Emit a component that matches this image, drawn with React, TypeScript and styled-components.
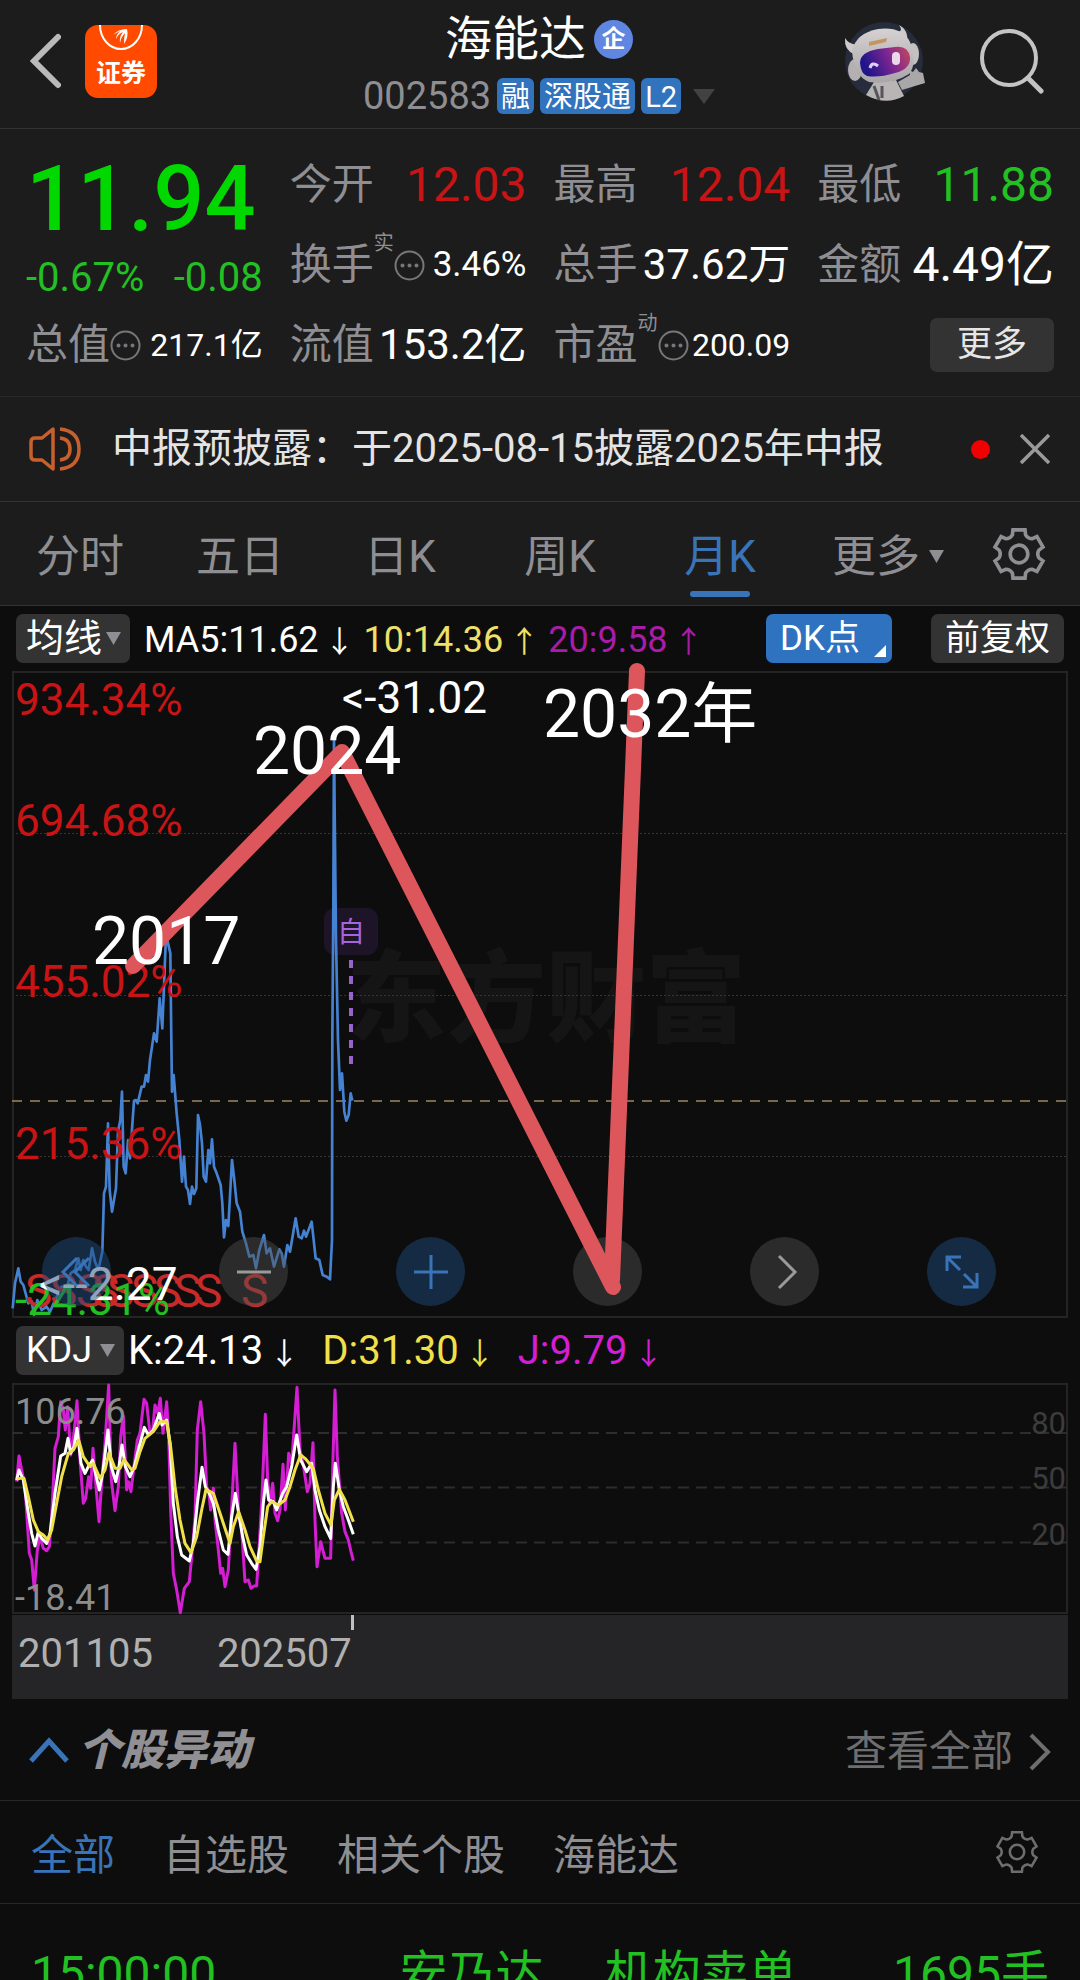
import React from "react";
import styled, { createGlobalStyle } from "styled-components";

const color = {
  panel: "#1c1c1c",
  page: "#0d0d0d",
  line: "#333333",
  frame: "#242424",
  label: "#8e8e93",
  green: "#22c022",
  red: "#c81414",
  blue: "#3a74b8",
  yellow: "#f0e04a",
  magenta: "#d41ed4",
};

const fontStack = `Roboto, "Noto Sans CJK SC", sans-serif`;

const GlobalStyle = createGlobalStyle`
  * { box-sizing: border-box; }
  body { margin: 0; background: ${color.page}; }
  button, select { font: inherit; color: inherit; background: none; border: 0; padding: 0; margin: 0; cursor: pointer; }
  svg { display: block; flex: none; }
  a { color: inherit; text-decoration: none; }
`;

const Page = styled.main`
  height: 100vh;
  overflow: hidden;
  background: ${color.page};
  color: #fff;
  font-family: ${fontStack};
`;

/* ---------- header ---------- */

const Header = styled.header`
  display: grid;
  grid-template-columns: 1fr auto 1fr;
  height: 129px;
  padding: 0 36px 0 30px;
  background: ${color.panel};
  border-bottom: 1px solid ${color.line};
`;

const HeaderSide = styled.div<{ $end?: boolean }>`
  display: flex;
  align-items: center;
  justify-content: ${(p) => (p.$end ? "flex-end" : "flex-start")};
  gap: ${(p) => (p.$end ? 54 : 24)}px;
  height: 122px;
`;

const IconButton = styled.button`
  display: flex;
  align-items: center;
  justify-content: center;
`;

const Broker = styled.button`
  display: flex;
  flex-direction: column;
  align-items: center;
  width: 72px;
  height: 73px;
  border-radius: 13px;
  background: #ff4a00;
  font-family: "Noto Sans CJK SC", sans-serif;
  font-weight: 700;
  font-size: 25px;
  line-height: 36px;
  color: #fff;
`;

const TitleBlock = styled.div`
  display: flex;
  flex-direction: column;
  align-items: center;
  padding: 11px 0 0 4px;
`;

const Title = styled.h1`
  display: flex;
  align-items: center;
  gap: 8px;
  margin: 0;
  font-size: 47px;
  font-weight: 400;
  line-height: 56px;
`;

const Certified = styled.span`
  display: flex;
  align-items: center;
  justify-content: center;
  width: 39px;
  height: 39px;
  border-radius: 50%;
  background: #5f86e0;
  font-size: 24px;
  font-weight: 700;
  line-height: 39px;
`;

const CodeRow = styled.div`
  display: flex;
  align-items: center;
  gap: 6px;
  height: 58px;
  font-size: 38px;
  line-height: 58px;
  color: ${color.label};
`;

const Tag = styled.span`
  height: 36px;
  padding: 0 4px;
  border-radius: 6px;
  background: #3273bd;
  color: #fff;
  font-size: 29px;
  line-height: 38px;
`;

const CodeCaret = styled(IconButton)`
  padding-left: 6px;
`;

/* ---------- quote ---------- */

const Quote = styled.section`
  display: grid;
  grid-template-columns: repeat(4, minmax(0, 1fr));
  grid-auto-rows: 80px;
  column-gap: 27px;
  padding: 16px 26px 11px;
  background: ${color.panel};
  border-bottom: 1px solid #282828;
`;

const PriceCell = styled.div`
  grid-row: span 2;
  display: flex;
  flex-direction: column;
  color: ${color.green};
`;

const Price = styled.strong`
  font-size: 90px;
  font-weight: 500;
  line-height: 110px;
  color: #00d800;
`;

const Change = styled.div`
  display: flex;
  justify-content: space-between;
  font-size: 40px;
  line-height: 46px;
`;

const Stat = styled.div`
  display: flex;
  align-items: center;
  justify-content: space-between;
  height: 80px;
  white-space: nowrap;
`;

const StatLabel = styled.span`
  display: flex;
  align-items: center;
  height: 60px;
  font-size: 42px;
  line-height: 62px;
  color: ${color.label};
`;

const Sup = styled.sup`
  align-self: flex-start;
  font-size: 20px;
  line-height: 16px;
`;

const StatValue = styled.span<{ $size: number; $tone?: string }>`
  font-size: ${(p) => p.$size}px;
  line-height: 60px;
  color: ${(p) => p.$tone ?? "#fff"};
`;

const MoreButton = styled.button`
  justify-self: end;
  align-self: center;
  width: 124px;
  height: 54px;
  border-radius: 7px;
  background: ${color.line};
  font-size: 35px;
  line-height: 54px;
  color: #e6e6e6;
`;

/* ---------- notice ---------- */

const Notice = styled.section`
  display: flex;
  align-items: center;
  height: 105px;
  padding: 0 30px 0 28px;
  background: ${color.panel};
  border-bottom: 1px solid ${color.line};
`;

const NoticeText = styled.a`
  flex: 1;
  padding-left: 30px;
  font-size: 40px;
  line-height: 60px;
  white-space: nowrap;
  color: #e4e4e4;
`;

const Unread = styled.span`
  width: 19px;
  height: 19px;
  margin-right: 30px;
  border-radius: 50%;
  background: #f00000;
`;

/* ---------- period tabs ---------- */

const Periods = styled.nav`
  display: grid;
  grid-template-columns: repeat(5, 20fr) 22fr 13fr;
  height: 104px;
  background: ${color.panel};
  border-bottom: 1px solid ${color.line};
`;

const Period = styled.button<{ $active?: boolean }>`
  position: relative;
  display: flex;
  align-items: center;
  justify-content: center;
  gap: 9px;
  height: 103px;
  padding-top: 6px;
  white-space: nowrap;
  font-size: 44px;
  line-height: 60px;
  color: ${(p) => (p.$active ? color.blue : color.label)};

  &::after {
    content: "";
    display: ${(p) => (p.$active ? "block" : "none")};
    position: absolute;
    bottom: 8px;
    width: 60px;
    height: 6px;
    border-radius: 3px;
    background: ${color.blue};
  }
`;

const GearButton = styled(IconButton)`
  justify-content: flex-start;
  height: 103px;
  padding-left: 16px;
`;

/* ---------- chart ---------- */

const IndicatorRow = styled.div`
  display: flex;
  align-items: center;
  height: 65px;
  padding: 0 16px;
`;

const Picker = styled.label<{ $gap: number }>`
  position: relative;
  display: flex;
  align-items: center;
  margin-right: ${(p) => p.$gap}px;

  svg { position: absolute; right: 9px; pointer-events: none; }
`;

const PickerSelect = styled.select<{ $size: number }>`
  appearance: none;
  width: ${(p) => p.$size * 3}px;
  height: 49px;
  padding-left: 10px;
  border-radius: 7px;
  background: ${color.line};
  font-size: ${(p) => p.$size}px;
  line-height: 49px;
`;

const Reading = styled.span<{ $tone: string; $size: number; $gap: number }>`
  margin-right: ${(p) => p.$gap}px;
  padding-top: 4px;
  font-size: ${(p) => p.$size}px;
  line-height: 60px;
  white-space: nowrap;
  color: ${(p) => p.$tone};
`;

const Arrow = styled.span`
  padding: 0 6px;
  font-size: 30px;
`;

const ToolButton = styled.button<{ $primary?: boolean }>`
  position: relative;
  width: ${(p) => (p.$primary ? 126 : 133)}px;
  height: 49px;
  margin-left: ${(p) => (p.$primary ? "auto" : "39px")};
  padding-right: ${(p) => (p.$primary ? "18px" : "0")};
  border-radius: 7px;
  background: ${(p) => (p.$primary ? "#2f72c0" : color.line)};
  font-size: 35px;
  line-height: 50px;

  svg { position: absolute; right: 6px; bottom: 6px; }
`;

const ChartFrame = styled.div`
  position: relative;
  margin: 0 12px;

  > svg { width: 100%; height: auto; overflow: visible; font-family: ${fontStack}; }
`;

const Annotations = styled.svg`
  position: absolute;
  inset: 0;
  pointer-events: none;
`;

const ChartControls = styled.div`
  position: absolute;
  left: 30px;
  right: 72px;
  bottom: 12px;
  display: flex;
  justify-content: space-between;
`;

const RoundButton = styled(IconButton)<{ $blue?: boolean }>`
  width: 69px;
  height: 69px;
  border-radius: 50%;
  background: ${(p) => (p.$blue ? "rgba(30, 74, 122, 0.5)" : "rgba(80, 80, 80, 0.45)")};
  color: ${(p) => (p.$blue ? color.blue : "#9a9a9a")};
`;

const DateStrip = styled.div`
  display: flex;
  gap: 64px;
  height: 84px;
  margin: 1px 12px 0;
  padding: 9px 6px;
  background: #252527;
  font-size: 40px;
  line-height: 60px;
  color: #b0b0b0;
`;

const LastDate = styled.time`
  position: relative;

  &::after {
    content: "";
    position: absolute;
    top: -9px;
    right: -2px;
    width: 3px;
    height: 15px;
    background: #c0c0c0;
  }
`;

/* ---------- movements ---------- */

const SectionHead = styled.div`
  display: flex;
  align-items: center;
  justify-content: space-between;
  height: 102px;
  padding: 0 29px;
  border-bottom: 1px solid #272727;
`;

const SectionTitle = styled.h2`
  display: flex;
  align-items: center;
  gap: 9px;
  margin: 0;
  font-size: 43px;
  font-style: italic;
  font-weight: 900;
  line-height: 60px;
  color: #909094;
`;

const SeeAll = styled.a`
  display: flex;
  align-items: center;
  gap: 16px;
  padding-top: 4px;
  font-size: 42px;
  line-height: 60px;
  color: #6e6e70;
`;

const Filters = styled.nav`
  display: flex;
  align-items: center;
  gap: 48px;
  height: 103px;
  padding: 0 41px 0 31px;
  border-bottom: 1px solid #272727;
`;

const Filter = styled.button<{ $active?: boolean }>`
  padding-top: 7px;
  font-size: 42px;
  line-height: 60px;
  color: ${(p) => (p.$active ? color.blue : color.label)};
`;

const FilterGear = styled(IconButton)`
  margin-left: auto;
`;

const Movements = styled.table`
  width: 100%;
  border-collapse: collapse;
  table-layout: fixed;
  font-size: 48px;
  line-height: 70px;
  color: ${color.green};

  td { padding: 35px 0; white-space: nowrap; }
  td:first-child { width: 37%; padding-left: 31px; }
  td:nth-child(2) { width: 19%; }
  td:last-child { padding-right: 31px; text-align: right; }
`;

/* ---------- icons ---------- */

const Caret = ({ w = 15, h = 13, fill = "#8e8e93" }: { w?: number; h?: number; fill?: string }) => (
  <svg width={w} height={h} viewBox="0 0 10 10" preserveAspectRatio="none" aria-hidden="true">
    <path d="M0 0H10L5 10Z" fill={fill} />
  </svg>
);

const Info = () => (
  <svg width="31" height="31" viewBox="0 0 31 31" aria-hidden="true">
    <circle cx="15.5" cy="15.5" r="14" fill="none" stroke="#77777b" strokeWidth="2" />
    <g fill="#77777b">
      <circle cx="8.5" cy="15.5" r="2" />
      <circle cx="15.5" cy="15.5" r="2" />
      <circle cx="22.5" cy="15.5" r="2" />
    </g>
  </svg>
);

const polar = (r: number, deg: number) => {
  const a = (deg * Math.PI) / 180;
  return `${(26 + r * Math.cos(a)).toFixed(2)} ${(26 + r * Math.sin(a)).toFixed(2)}`;
};

const gearPath =
  [0, 60, 120, 180, 240, 300]
    .map((step, i) => {
      const a = step - 90;
      return `${i ? "L" : "M"}${polar(19.5, a - 19)} L${polar(24, a - 14)} L${polar(24, a + 14)} L${polar(19.5, a + 19)} Q${polar(17, a + 30)} ${polar(19.5, a + 41)}`;
    })
    .join(" ") + "Z";

const Gear = ({ size, weight, tone }: { size: number; weight: number; tone: string }) => (
  <svg width={size} height={size} viewBox="0 0 52 52" fill="none" stroke={tone} strokeWidth={weight} aria-hidden="true">
    <path d={gearPath} />
    <circle cx="26" cy="26" r="8.5" />
  </svg>
);

const Robot = () => (
  <svg width="82" height="82" viewBox="0 0 82 82" aria-hidden="true">
    <defs>
      <linearGradient id="visor" x1="0" x2="1" y1="0.3" y2="0">
        <stop offset="0" stopColor="#20158a" />
        <stop offset="0.5" stopColor="#7a2592" />
        <stop offset="1" stopColor="#c84a5c" />
      </linearGradient>
      <linearGradient id="shell" x1="0" x2="0" y1="0" y2="1">
        <stop offset="0" stopColor="#d6d2d2" />
        <stop offset="1" stopColor="#a9a5a8" />
      </linearGradient>
    </defs>
    <circle cx="40" cy="41" r="39" fill="#262c3b" />
    <path d="M22 75L30 62L52 60L60 76Q42 86 22 75Z" fill="#b9b5b5" />
    <path d="M30 66L35 80M38 66V78" stroke="#55555c" strokeWidth="3" />
    <path d="M54 62L66 55L65 50L69 52L72 48L75 52L79 53L81 63L71 66L58 70Z" fill="#aaa7a8" />
    <path d="M1 18Q0 30 10 34L16 24Q6 26 1 18Z" fill="#cfcaca" />
    <path d="M52 12Q60 12 55 5Q65 10 63 23L57 26Z" fill="#cfcaca" />
    <ellipse cx="11" cy="50" rx="7" ry="11" fill="#b4b0b1" />
    <ellipse cx="69" cy="34" rx="6" ry="11" fill="#c5c1c1" />
    <path d="M8 31Q12 13 34 9Q58 6 66 22Q74 43 65 54Q48 65 25 62Q10 56 8 31Z" fill="url(#shell)" />
    <path d="M25 22L43 18L42 22L25 26Z" fill="#c4965f" />
    <path d="M16 43Q16 32 34 29L51 27Q64 25 66 37Q67 49 51 53Q35 58 23 56Q17 54 16 43Z" fill="url(#visor)" />
    <path d="M26 48Q28 41 34 46" fill="none" stroke="#ded0fa" strokeWidth="3" />
    <rect x="48" y="32" width="8" height="13" rx="4" fill="#ead7ea" />
  </svg>
);

/* ---------- data ---------- */

/* Series are sampled on a grid three times finer than the chart units. */
const PRICE =
  "38,805 45,730 55,685 62,725 70,735 85,790 95,785 102,825 112,780 125,810 140,800 150,815 165,780 185,740 200,745 212,700 225,690 235,655 242,690 250,660 258,680 266,690 276,625 285,665 295,690 307,635 312,460 318,440 324,250 329,450 336,515 348,445 354,275 361,240 366,155 371,380 377,400 384,300 390,355 402,182 408,180 413,190 425,140 432,140 438,105 444,125 450,60 462,-20 470,5 479,-125 487,-35 497,-290 503,-295 511,-260 514,0 516,155 521,105 530,220 538,300 546,425 552,350 558,440 564,450 570,492 576,440 582,462 589,445 594,225 600,255 606,310 611,410 618,425 625,330 630,370 636,298 642,380 650,400 662,435 667,490 672,592 678,540 685,558 696,360 703,420 710,490 720,515 727,575 738,610 748,650 760,645 768,685 778,630 792,585 800,640 810,625 822,680 838,628 845,640 852,680 862,615 870,635 887,535 896,590 905,595 912,572 918,590 935,545 947,655 958,660 968,705 980,710 990,718 996,600 997,0 1000,-400 1002,-915 1004,-690 1008,-300 1014,0 1020,150 1026,100 1033,215 1039,242 1046,225 1052,160 1057,182";

const J_LINE =
  "50,335 57,258 63,290 75,350 88,550 95,570 103,660 112,540 120,500 130,535 140,542 148,530 155,440 165,235 175,200 182,95 190,120 196,180 203,110 212,255 222,190 231,92 240,270 250,400 257,385 266,320 272,355 279,235 288,350 297,455 305,340 315,220 326,45 334,330 345,422 355,350 362,200 370,138 380,360 386,335 393,365 403,280 412,210 420,190 432,88 440,100 450,190 458,180 465,105 473,130 481,85 489,190 500,95 506,200 512,420 520,610 530,660 541,728 553,655 568,635 577,540 585,440 592,180 602,95 612,190 620,350 626,365 632,420 640,355 645,450 655,540 662,610 668,595 675,650 685,600 693,450 705,220 716,430 725,480 735,635 745,630 753,655 762,648 770,648 778,520 786,380 796,133 803,330 810,400 818,340 825,430 833,452 840,420 849,283 856,420 866,250 875,280 891,52 900,240 910,285 922,365 930,340 939,218 945,450 951,590 962,515 975,565 992,565 998,300 1005,60 1012,260 1025,430 1035,485 1045,510 1053,545 1060,572";

const K_LINE =
  "50,330 57,300 70,330 85,430 95,490 105,528 115,485 125,505 140,520 150,490 165,370 182,258 195,250 204,205 212,250 222,230 231,175 243,280 255,310 265,290 278,270 290,325 298,360 308,310 324,180 334,290 347,335 357,290 366,225 376,290 390,320 403,290 415,240 433,172 445,195 460,180 478,130 486,165 500,150 510,220 520,400 532,500 545,555 568,573 580,520 592,400 606,292 616,350 628,370 640,400 655,480 670,540 684,553 695,440 706,370 716,430 728,500 740,555 755,580 768,598 780,530 790,400 798,330 806,390 820,395 830,420 848,370 860,350 875,290 890,195 902,270 920,305 935,280 945,360 958,420 975,470 992,505 1000,350 1006,280 1018,360 1030,410 1045,450 1060,493";

const D_LINE =
  "50,328 60,325 72,325 85,380 100,450 115,485 130,495 143,510 155,480 170,400 185,320 205,250 220,240 236,210 250,260 270,290 280,280 300,325 315,300 327,248 345,295 360,295 372,268 395,300 405,295 420,245 435,205 460,185 480,155 500,155 512,230 525,350 540,450 555,520 573,548 590,500 605,420 618,358 640,370 660,430 690,520 700,470 716,425 735,480 750,530 770,573 780,575 790,500 803,410 815,395 835,405 855,390 870,350 885,300 902,255 915,265 940,295 955,360 975,430 993,465 1003,390 1018,358 1035,390 1060,455";

const AXIS = [
  { y: 715, text: "934.34%" },
  { y: 836, text: "694.68%" },
  { y: 997, text: "455.02%" },
  { y: 1159, text: "215.36%" },
];

const SELL_MARKS = [25, 50, 76, 92, 107, 131, 154, 174, 195, 241];

const PERIODS = ["分时", "五日", "日K", "周K", "月K"];
const FILTERS = ["全部", "自选股", "相关个股", "海能达"];

/* ---------- charts ---------- */

const PriceChart = () => (
  <ChartFrame>
    <svg viewBox="12 671 1056 647" role="img" aria-label="月K线">
      <text x="346" y="1034" fontSize="100" fontWeight="900" fill="#151515">东方财富</text>
      <g stroke="#343434" strokeWidth="1" strokeDasharray="2 2">
        <path d="M12 833.5H1068M12 995.5H1068M12 1156.5H1068" />
      </g>
      <rect x="13" y="672" width="1054" height="645" fill="none" stroke={color.frame} strokeWidth="2" />
      <path d="M12 1101H1067" stroke="#a0875f" strokeWidth="1.5" strokeDasharray="10 8" />
      <rect x="324" y="908" width="54" height="47" rx="11" fill="#1e1428" />
      <text x="351" y="942" fontSize="28" textAnchor="middle" fill="#a765dd">自</text>
      <path d="M351 960V1064" stroke="#9a62cc" strokeWidth="4" strokeDasharray="8 8" />
      <g transform="translate(0 1040) scale(0.33333)">
        <polyline points={PRICE} fill="none" stroke="#4583d2" strokeWidth="8" strokeLinejoin="round" />
      </g>
      <g fontSize="44" fill={color.red}>
        {AXIS.map((tick) => (
          <text key={tick.text} x="15" y={tick.y}>{tick.text}</text>
        ))}
      </g>
      <g fontSize="46" fill="#c82a2a">
        {SELL_MARKS.map((x) => (
          <text key={x} x={x} y="1307">S</text>
        ))}
      </g>
      <text x="15" y="1315" fontSize="44" fill={color.green}>-24.31%</text>
      <text x="39" y="1300" fontSize="46" fill="#fff">&lt;--2.27</text>
      <text x="342" y="713" fontSize="44" fill="#fff">&lt;-31.02</text>
    </svg>
    <ChartControls>
      <RoundButton $blue aria-label="最早">
        <svg width="36" height="36" viewBox="0 0 36 36" fill="none" stroke="currentColor" strokeWidth="3">
          <path d="M18 4L4 18L18 32M30 4L16 18L30 32" />
        </svg>
      </RoundButton>
      <RoundButton aria-label="缩小">
        <svg width="36" height="36" viewBox="0 0 36 36" stroke="currentColor" strokeWidth="3">
          <path d="M1 18H35" />
        </svg>
      </RoundButton>
      <RoundButton $blue aria-label="放大">
        <svg width="36" height="36" viewBox="0 0 36 36" stroke="currentColor" strokeWidth="3">
          <path d="M1 18H35M18 1V35" />
        </svg>
      </RoundButton>
      <RoundButton aria-label="左移" />
      <RoundButton aria-label="右移">
        <svg width="36" height="36" viewBox="0 0 36 36" fill="none" stroke="currentColor" strokeWidth="3">
          <path d="M12 2L28 18L12 34" />
        </svg>
      </RoundButton>
      <RoundButton $blue aria-label="全屏">
        <svg width="36" height="36" viewBox="0 0 36 36" fill="none" stroke="currentColor" strokeWidth="3">
          <path d="M3 17V3H17M3 3L16 16M33 19V33H19M33 33L20 20" />
        </svg>
      </RoundButton>
    </ChartControls>
    <Annotations viewBox="12 671 1056 647">
      <g fill="none" stroke="#dc565b" strokeWidth="16" strokeLinecap="round" strokeLinejoin="round">
        <path d="M133 966L342 752L613 1287" />
        <path d="M637 671L612 1280" />
      </g>
      <g fontSize="66" fill="#fff">
        <text x="253" y="774">2024</text>
        <text x="92" y="964">2017</text>
        <text x="543" y="737">2032年</text>
      </g>
    </Annotations>
  </ChartFrame>
);

const KdjChart = () => (
  <ChartFrame>
    <svg viewBox="12 1383 1056 231" role="img" aria-label="KDJ">
      <rect x="13" y="1384" width="1054" height="229" fill="none" stroke={color.frame} strokeWidth="2" />
      <path d="M12 1433H1067M12 1487.5H1067M12 1542.5H1067" stroke="#2d2d2d" strokeWidth="2" strokeDasharray="11 7" />
      <g fontSize="31" fill="#3c3c3c" textAnchor="end">
        <text x="1066" y="1434">80</text>
        <text x="1066" y="1489">50</text>
        <text x="1066" y="1545">20</text>
      </g>
      <g transform="translate(0 1370) scale(0.33333)" fill="none" strokeWidth="9" strokeLinejoin="round">
        <polyline points={J_LINE} stroke={color.magenta} />
        <polyline points={K_LINE} stroke="#ffffff" />
        <polyline points={D_LINE} stroke={color.yellow} />
      </g>
      <g fontSize="36" fill="#8c8c8c">
        <text x="15" y="1424">106.76</text>
        <text x="15" y="1610">-18.41</text>
      </g>
    </svg>
  </ChartFrame>
);

/* ---------- page ---------- */

export default function App() {
  return (
    <Page>
      <GlobalStyle />

      <Header>
        <HeaderSide>
          <IconButton aria-label="返回">
            <svg width="31" height="56" viewBox="0 0 31 56" fill="none" stroke="#bababa" strokeWidth="6" strokeLinecap="round">
              <path d="M28 4L4 28L28 52" />
            </svg>
          </IconButton>
          <Broker>
            <svg width="44" height="28" viewBox="0 0 44 28" aria-hidden="true">
              <path d="M1 0A21 24 0 0 0 43 0" fill="none" stroke="#fff" strokeWidth="2" />
              <path d="M14 10Q19 4 28 4Q30 12 25 19Q25 12 26 8Q22 12 21 18Q20 12 24 7Q19 9 17 14Q17 10 21 6Q17 8 14 10Z" fill="#fff" />
            </svg>
            证券
          </Broker>
        </HeaderSide>
        <TitleBlock>
          <Title>
            海能达<Certified>企</Certified>
          </Title>
          <CodeRow>
            <span>002583</span>
            <Tag>融</Tag>
            <Tag>深股通</Tag>
            <Tag>L2</Tag>
            <CodeCaret aria-label="切换">
              <Caret w={22} h={15} fill="#424242" />
            </CodeCaret>
          </CodeRow>
        </TitleBlock>
        <HeaderSide $end>
          <IconButton aria-label="助手">
            <Robot />
          </IconButton>
          <IconButton aria-label="搜索">
            <svg width="64" height="66" viewBox="0 0 64 66" fill="none" stroke="#c4c4c4" strokeWidth="4" strokeLinecap="round">
              <circle cx="29" cy="30" r="27" />
              <path d="M48 50L61 63" strokeWidth="5" />
            </svg>
          </IconButton>
        </HeaderSide>
      </Header>

      <Quote>
        <PriceCell>
          <Price>11.94</Price>
          <Change>
            <span>-0.67%</span>
            <span>-0.08</span>
          </Change>
        </PriceCell>
        <Stat>
          <StatLabel>今开</StatLabel>
          <StatValue $size={48} $tone={color.red}>12.03</StatValue>
        </Stat>
        <Stat>
          <StatLabel>最高</StatLabel>
          <StatValue $size={48} $tone={color.red}>12.04</StatValue>
        </Stat>
        <Stat>
          <StatLabel>最低</StatLabel>
          <StatValue $size={48} $tone={color.green}>11.88</StatValue>
        </Stat>
        <Stat>
          <StatLabel>换手<Sup>实</Sup><Info /></StatLabel>
          <StatValue $size={35}>3.46%</StatValue>
        </Stat>
        <Stat>
          <StatLabel>总手</StatLabel>
          <StatValue $size={42}>37.62万</StatValue>
        </Stat>
        <Stat>
          <StatLabel>金额</StatLabel>
          <StatValue $size={48}>4.49亿</StatValue>
        </Stat>
        <Stat>
          <StatLabel>总值<Info /></StatLabel>
          <StatValue $size={32}>217.1亿</StatValue>
        </Stat>
        <Stat>
          <StatLabel>流值</StatLabel>
          <StatValue $size={42}>153.2亿</StatValue>
        </Stat>
        <Stat>
          <StatLabel>市盈<Sup>动</Sup><Info /></StatLabel>
          <StatValue $size={32}>200.09</StatValue>
        </Stat>
        <MoreButton>更多</MoreButton>
      </Quote>

      <Notice>
        <svg width="54" height="46" viewBox="0 0 54 46" fill="none" stroke="#c8602e" strokeWidth="3.5" aria-hidden="true">
          <path d="M25 3V43L14 34H7Q3 34 3 30V16Q3 12 7 12H14Z" strokeLinejoin="round" />
          <path d="M32 12Q42 13 42 23Q42 33 32 34M32 3Q51 5 51 23Q51 41 32 43" />
        </svg>
        <NoticeText href="#notice">中报预披露：于2025-08-15披露2025年中报</NoticeText>
        <Unread />
        <IconButton aria-label="关闭">
          <svg width="30" height="30" viewBox="0 0 30 30" stroke="#9a9a9a" strokeWidth="3.5">
            <path d="M1 1L29 29M29 1L1 29" />
          </svg>
        </IconButton>
      </Notice>

      <Periods>
        {PERIODS.map((name) => (
          <Period key={name} $active={name === "月K"}>{name}</Period>
        ))}
        <Period>更多<Caret /></Period>
        <GearButton aria-label="图表设置">
          <Gear size={54} weight={3.5} tone="#8e8e93" />
        </GearButton>
      </Periods>

      <IndicatorRow>
        <Picker $gap={14}>
          <PickerSelect $size={38} aria-label="主图指标" defaultValue="均线">
            <option>均线</option>
          </PickerSelect>
          <Caret />
        </Picker>
        <Reading $tone="#fff" $size={36} $gap={3}>MA5:11.62<Arrow>↓</Arrow></Reading>
        <Reading $tone="#efe06a" $size={36} $gap={3}>10:14.36<Arrow>↑</Arrow></Reading>
        <Reading $tone="#a81ca8" $size={36} $gap={3}>20:9.58<Arrow>↑</Arrow></Reading>
        <ToolButton $primary>
          DK点
          <svg width="12" height="12" viewBox="0 0 12 12" aria-hidden="true">
            <path d="M12 0V12H0Z" fill="#fff" />
          </svg>
        </ToolButton>
        <ToolButton>前复权</ToolButton>
      </IndicatorRow>

      <PriceChart />

      <IndicatorRow>
        <Picker $gap={4}>
          <PickerSelect $size={36} aria-label="副图指标" defaultValue="KDJ">
            <option>KDJ</option>
          </PickerSelect>
          <Caret />
        </Picker>
        <Reading $tone="#fff" $size={40} $gap={17}>K:24.13<Arrow>↓</Arrow></Reading>
        <Reading $tone={color.yellow} $size={40} $gap={17}>D:31.30<Arrow>↓</Arrow></Reading>
        <Reading $tone={color.magenta} $size={40} $gap={17}>J:9.79<Arrow>↓</Arrow></Reading>
      </IndicatorRow>

      <KdjChart />

      <DateStrip>
        <time>201105</time>
        <LastDate>202507</LastDate>
      </DateStrip>

      <SectionHead>
        <SectionTitle>
          <svg width="40" height="26" viewBox="0 0 40 26" fill="none" stroke={color.blue} strokeWidth="5" aria-hidden="true">
            <path d="M2 24L20 4L38 24" />
          </svg>
          个股异动
        </SectionTitle>
        <SeeAll href="#all">
          查看全部
          <svg width="22" height="38" viewBox="0 0 22 38" fill="none" stroke="#6e6e70" strokeWidth="4" aria-hidden="true">
            <path d="M2 2L19 19L2 36" />
          </svg>
        </SeeAll>
      </SectionHead>

      <Filters>
        {FILTERS.map((name, i) => (
          <Filter key={name} $active={i === 0}>{name}</Filter>
        ))}
        <FilterGear aria-label="异动设置">
          <Gear size={44} weight={3} tone="#6e6e70" />
        </FilterGear>
      </Filters>

      <Movements>
        <tbody>
          <tr>
            <td>15:00:00</td>
            <td>安乃达</td>
            <td>机构卖单</td>
            <td>1695手</td>
          </tr>
        </tbody>
      </Movements>
    </Page>
  );
}
